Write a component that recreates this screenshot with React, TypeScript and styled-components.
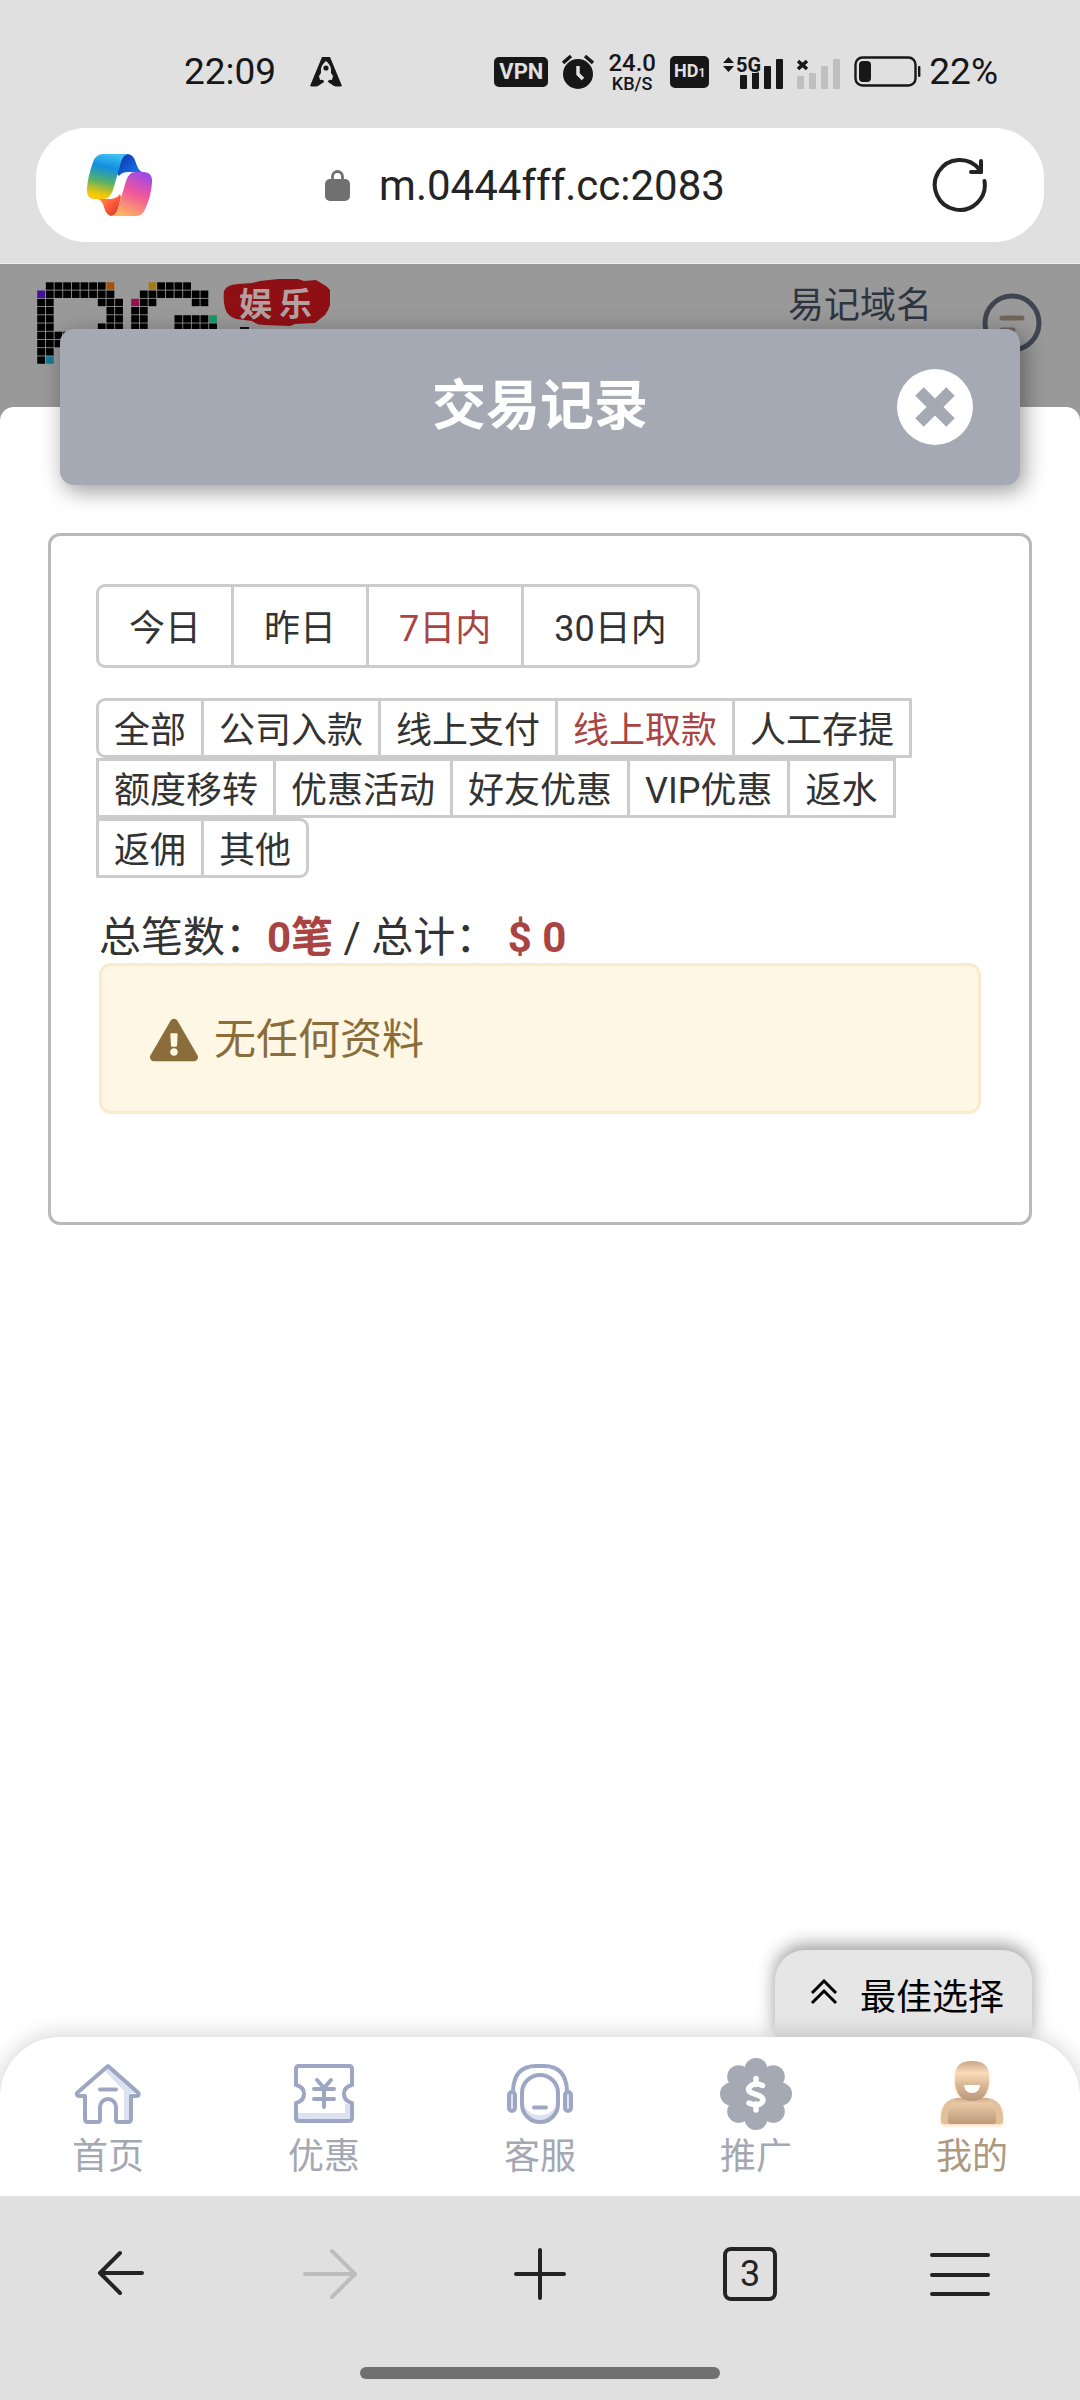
import React, { useState } from "react";
import styled, { createGlobalStyle } from "styled-components";

const GlobalStyle = createGlobalStyle`
  *, *::before, *::after { box-sizing: border-box; }
  body { margin: 0; background: #e0e0e0; }
  body, button, input {
    font-family: Roboto, "Noto Sans CJK SC", sans-serif;
    font-weight: 400;
  }
  button { margin: 0; padding: 0; border: 0; background: none; color: inherit; cursor: pointer; }
  svg { display: block; flex: none; }
`;

const Screen = styled.div`
  display: flex;
  flex-direction: column;
  min-height: 100vh;
  color: #333;
`;

/* ---------- status bar ---------- */

const StatusBar = styled.header`
  display: flex;
  align-items: center;
  justify-content: space-between;
  height: 128px;
  padding: 16px 82px 0 184px;
  color: #171717;
  font-size: 37px;
  line-height: 40px;
`;

const StatusGroup = styled.div<{ $gap: number }>`
  display: flex;
  align-items: center;
  gap: ${(p) => p.$gap}px;
`;

const Badge = styled.span<{ $size: number }>`
  padding: 0 ${(p) => (p.$size > 20 ? 5 : 4)}px;
  border-radius: 5px;
  background: #171717;
  color: #e0e0e0;
  font-size: ${(p) => p.$size}px;
  font-weight: 700;
  line-height: 30px;
`;

const Small = styled.small`
  font-size: 12px;
`;

const Speed = styled.span`
  display: flex;
  flex-direction: column;
  align-items: center;
  font-size: 24px;
  font-weight: 500;
  line-height: 24px;
`;

const SpeedUnit = styled.span`
  font-size: 18px;
  line-height: 18px;
`;

/* ---------- address bar ---------- */

const AddressWrap = styled.div`
  padding: 0 36px 21px;
  border-bottom: 1px solid #eee;
`;

const AddressBar = styled.div`
  display: flex;
  align-items: center;
  justify-content: space-between;
  height: 114px;
  padding: 0 56px 0 50px;
  border-radius: 50px;
  background: #fff;
`;

const Url = styled.button`
  display: flex;
  align-items: center;
  gap: 29px;
  padding: 2px 36px 0 0;
  color: #242424;
  font-size: 42px;
  line-height: 50px;
`;

/* ---------- site ---------- */

const Site = styled.main`
  display: flex;
  flex: 1;
  flex-direction: column;
  background: #999;
`;

const SiteHeader = styled.div`
  display: flex;
  align-items: flex-start;
  height: 143px;
  padding: 15px 38px 0 36px;
`;

const DomainLink = styled.a`
  margin: 0 50px 0 auto;
  padding-top: 3px;
  color: #2f3540;
  font-size: 36px;
  line-height: 48px;
  text-decoration: none;
`;

const MenuButton = styled.button`
  padding-top: 14px;
`;

const Sheet = styled.section`
  display: flex;
  flex: 1;
  flex-direction: column;
  border-radius: 14px 14px 0 0;
  background: #fff;
`;

const TitleBar = styled.div`
  display: grid;
  grid-template-columns: 1fr auto 1fr;
  align-items: center;
  height: 156px;
  margin: -78px 60px 48px;
  padding: 0 47px;
  border-radius: 14px;
  background: #a4a9b4;
  color: #fff;
  box-shadow: 4px 6px 22px rgba(0, 0, 0, 0.4);
`;

const Title = styled.h1`
  grid-column: 2;
  margin: 0;
  font-size: 54px;
  font-weight: 700;
  line-height: 80px;
`;

const CloseButton = styled.button`
  justify-self: end;
`;

const Panel = styled.div`
  min-height: 692px;
  margin: 0 48px;
  padding: 48px 45px;
  border: 3px solid #b9b9b9;
  border-radius: 12px;
`;

const ButtonGroup = styled.div`
  display: flex;
  flex-wrap: wrap;
  margin: 0 0 30px 3px;
`;

const Option = styled.button<{ $active: boolean; $large?: boolean }>`
  height: ${(p) => (p.$large ? 84 : 60)}px;
  margin-left: -3px;
  padding: 6px ${(p) => (p.$large ? 30 : 15)}px 0;
  border: 3px solid #ccc;
  background: #fff;
  color: ${(p) => (p.$active ? "#a94442" : "#333")};
  font-size: 36px;
  line-height: 48px;
  &:first-child { border-radius: 9px 0 0 9px; }
  &:last-child { border-radius: 0 9px 9px 0; }
`;

const Totals = styled.p`
  margin: 0 3px;
  padding-top: 4px;
  font-size: 42px;
  line-height: 51px;
`;

const Amount = styled.strong`
  color: #a94442;
  font-weight: 700;
`;

const Alert = styled.div`
  display: flex;
  align-items: center;
  gap: 16px;
  margin: 0 3px;
  padding: 44px 48px 41px;
  border: 3px solid #faebcc;
  border-radius: 12px;
  background: #fdf7e3;
  color: #8a6d3b;
  font-size: 42px;
  line-height: 60px;
`;

const BestPick = styled.button`
  display: flex;
  align-items: center;
  gap: 22px;
  align-self: flex-end;
  height: 87px;
  margin: auto 48px 0 0;
  padding: 8px 28px 0 35px;
  border-radius: 30px 30px 0 0;
  background: #e6e6e6;
  color: #000;
  font-size: 36px;
  line-height: 48px;
  box-shadow: 0 -5px 18px rgba(0, 0, 0, 0.4);
  svg { margin-bottom: 12px; }
`;

const TabBar = styled.nav`
  position: relative;
  display: flex;
  height: 159px;
  padding-top: 20px;
  border-radius: 60px 60px 0 0;
  background: #fff;
  box-shadow: 0 0 24px rgba(0, 0, 0, 0.2);
`;

const Tab = styled.a<{ $active?: boolean }>`
  display: flex;
  flex: 1;
  flex-direction: column;
  align-items: center;
  gap: 2px;
  color: ${(p) => (p.$active ? "#af9880" : "#a4a8b2")};
  font-size: 36px;
  line-height: 48px;
  text-decoration: none;
`;

/* ---------- browser toolbar ---------- */

const Toolbar = styled.footer`
  position: relative;
  display: flex;
  flex-direction: column;
  align-items: center;
  justify-content: space-between;
  height: 204px;
  padding: 50px 15px 21px;
  background: #e0e0e0;
`;

const ToolRow = styled.div`
  display: flex;
  width: 100%;
`;

const Tool = styled.button`
  display: flex;
  flex: 1;
  align-items: center;
  justify-content: center;
  height: 56px;
  color: #242424;
  &:disabled { color: #bdbdbd; cursor: default; }
`;

const TabCount = styled.span`
  width: 54px;
  height: 54px;
  border: 4px solid #242424;
  border-radius: 8px;
  font-size: 36px;
  line-height: 46px;
`;

const HomeIndicator = styled.div`
  width: 360px;
  height: 12px;
  border-radius: 6px;
  background: #707070;
`;

/* ---------- drawings ---------- */

const RocketIcon = () => (
  <svg width="32" height="30" viewBox="0 0 32 30" aria-hidden="true">
    <path d="M12 0h8l12 29q-4 1-8 0l-6-4q0-3 4-2l1-4-2-3V12q-1-5-5-8-4 3-5 8v4l-2 3 1 4q4-1 4 2l-6 4q-4 1-8 0z" fill="#171717" />
    <circle cx="16" cy="11" r="2.6" fill="#171717" />
  </svg>
);

const AlarmIcon = () => (
  <svg width="32" height="36" viewBox="0 0 32 36" aria-hidden="true">
    <circle cx="16" cy="20" r="15" fill="#171717" />
    <path d="M1 9 9 2M31 9 23 2" stroke="#171717" strokeWidth="3.5" />
    <path d="M16 12v8l5 5" stroke="#e0e0e0" strokeWidth="3.5" fill="none" />
  </svg>
);

const MobileSignal = () => (
  <svg width="60" height="46" viewBox="0 -6 60 46" aria-hidden="true">
    <path d="M0 8 5.500 2 11 8zM0 11h11l-5.500 6z" fill="#171717" />
    <rect x="17" y="20" width="7" height="14" rx="1" fill="#171717" />
    <rect x="29" y="17" width="7" height="17" rx="1" fill="#171717" />
    <rect x="41" y="11" width="7" height="23" rx="1" fill="#171717" />
    <rect x="53" y="4" width="7" height="30" rx="1" fill="#171717" />
    <text x="13" y="17" fontSize="20" fontWeight="700" fill="#171717" stroke="#e0e0e0" strokeWidth="2" paintOrder="stroke">5G</text>
  </svg>
);

const EmptySignal = () => (
  <svg width="43" height="46" viewBox="0 -6 43 46" aria-hidden="true">
    <path d="M1 6 10 14M10 6 1 14" stroke="#171717" strokeWidth="3.5" />
    <rect x="0" y="21" width="7" height="13" rx="1" fill="#bfbfbf" />
    <rect x="12" y="18" width="7" height="16" rx="1" fill="#bfbfbf" />
    <rect x="24" y="11" width="7" height="23" rx="1" fill="#bfbfbf" />
    <rect x="36" y="4" width="7" height="30" rx="1" fill="#bfbfbf" />
  </svg>
);

const BatteryIcon = () => (
  <svg width="67" height="32" viewBox="0 0 67 32" aria-hidden="true">
    <rect x="1.500" y="1.500" width="60" height="28" rx="7" fill="none" stroke="#171717" strokeWidth="2.400" />
    <rect x="5" y="5" width="12" height="21" rx="4" fill="#171717" />
    <rect x="64" y="10" width="2.400" height="11" rx="1" fill="#171717" />
  </svg>
);

const CopilotLogo = () => (
  <svg width="68" height="62" viewBox="0 0 68 62" aria-hidden="true">
    <defs>
      <linearGradient id="cpA" x1="0.600" y1="0" x2="0.400" y2="1">
        <stop offset="0" stopColor="#3fc0f5" /><stop offset="0.300" stopColor="#118fe0" />
        <stop offset="0.620" stopColor="#53b06b" /><stop offset="0.900" stopColor="#e8c60c" /><stop offset="1" stopColor="#ffc800" />
      </linearGradient>
      <linearGradient id="cpB" x1="0.700" y1="0" x2="0.300" y2="1">
        <stop offset="0" stopColor="#a04be8" /><stop offset="0.450" stopColor="#f0569a" /><stop offset="1" stopColor="#ffb45c" />
      </linearGradient>
      <linearGradient id="cpC" x1="0" y1="0" x2="1" y2="1">
        <stop offset="0" stopColor="#0b2fae" /><stop offset="1" stopColor="#1b80ea" />
      </linearGradient>
      <linearGradient id="cpD" x1="0" y1="0" x2="1" y2="1">
        <stop offset="0" stopColor="#ff9a4a" /><stop offset="0.500" stopColor="#ff5f3c" /><stop offset="1" stopColor="#c8322c" />
      </linearGradient>
    </defs>
    <path d="M31 20 36 3Q38 0 42 0 48 1 50 9 52 16 56 18H42Q36 18 33 22z" fill="url(#cpC)" />
    <path d="M35 43 31 59Q29 62 25 62 20 61 18 53 16 46 12 45h13q7-1 9-5z" fill="url(#cpD)" />
    <path d="M17 0h25q-5 1-7 8l-8 28q-3 9-10 9H8Q0 45 1 34 2 22 7 8 10 0 17 0z" fill="url(#cpA)" />
    <path d="M50 62H25q5-1 7-8l8-27q3-9 9-9h8q10 0 9 11-1 13-6 24-3 9-10 9z" fill="url(#cpB)" />
  </svg>
);

const LockIcon = () => (
  <svg width="25" height="32" viewBox="0 0 25 32" aria-hidden="true">
    <rect x="0" y="9" width="25" height="22" rx="5" fill="#707070" />
    <path d="M7.500 11V6.500a5 5 0 0 1 10 0V11" fill="none" stroke="#707070" strokeWidth="2.800" />
  </svg>
);

const RefreshIcon = () => (
  <svg width="56" height="56" viewBox="0 0 56 56" fill="none" stroke="#242424" strokeWidth="4" strokeLinecap="round" strokeLinejoin="round" aria-hidden="true">
    <path d="M52.500 24a25 25 0 1 1-5-11.500l1.500 2.500" />
    <path d="M49 4v11H39" />
  </svg>
);

const P_ROWS = [".#######o.", "p########.", "##.....###", "##......##", "##......##", "##.....###", "########..", "#######...", "##........", "#b........"];
const G_ROWS = ["..y####...", ".########.", "m##....##.", "##........", "##...####g", "##...#####", "##......##"];
const PIXEL_COLORS: Record<string, string> = {
  "#": "#000", o: "#a8500a", p: "#42129b", b: "#157a97", y: "#a67c12", m: "#96124f", g: "#159a63",
};

const Pixels = ({ rows, x0 }: { rows: string[]; x0: number }) => (
  <>
    {rows.flatMap((row, y) =>
      row.split("").map((c, x) =>
        c === "." ? null : <rect key={`${x}-${y}`} x={x0 + x * 8.66} y={3.300 + y * 8.230} width="7.800" height="7.400" fill={PIXEL_COLORS[c]} />
      )
    )}
  </>
);

const SiteLogo = () => (
  <svg width="294" height="90" viewBox="0 0 294 90" role="img" aria-label="PG 娱乐">
    <Pixels rows={P_ROWS} x0={1.200} />
    <Pixels rows={G_ROWS} x0={95.200} />
    <path d="M188 12q2-6 14-7l14-1 8-2 18-2 8-1 12 1 6 2 12-1 10 6q5 4 6 9-1 12-7 20l-10 8-20 1-5 2-26-1q-7 0-12-4l-16-2q-9-3-11-11-2-8-1-17z" fill="#8e1014" />
    <text x="203" y="37" fontSize="33" fontWeight="700" fill="#b3a0a1">娱</text>
    <text x="243" y="37" fontSize="33" fontWeight="700" fill="#b3a0a1">乐</text>
    <rect x="204" y="48" width="9" height="8" fill="#111" />
  </svg>
);

const MenuCircle = () => (
  <svg width="60" height="60" viewBox="0 0 60 60" fill="none" aria-hidden="true">
    <circle cx="30" cy="30" r="27" stroke="#404551" strokeWidth="5" />
    <path d="M20 25h20M20 37h11" stroke="#73655a" strokeWidth="5" strokeLinecap="round" />
  </svg>
);

const CloseIcon = () => (
  <svg width="76" height="76" viewBox="0 0 76 76" aria-hidden="true">
    <circle cx="38" cy="38" r="38" fill="#fff" />
    <path d="M22.500 22.500 53.500 53.500M53.500 22.500 22.500 53.500" stroke="#a4a9b4" strokeWidth="12" />
  </svg>
);

const WarningIcon = () => (
  <svg width="48" height="44" viewBox="0 0 576 512" aria-hidden="true">
    <path fill="#8a6d3b" d="M569.517 440.013C587.975 472.007 564.806 512 527.940 512H48.054c-36.937 0-59.999-40.055-41.577-71.987L246.423 23.985c18.467-32.009 64.720-31.951 83.154 0l239.940 416.028zM288 354c-25.405 0-46 20.595-46 46s20.595 46 46 46 46-20.595 46-46-20.595-46-46-46zm-43.673-165.346l7.418 136c.347 6.364 5.609 11.346 11.982 11.346h48.546c6.373 0 11.635-4.982 11.982-11.346l7.418-136c.375-6.874-5.098-12.654-11.982-12.654h-63.383c-6.884 0-12.356 5.780-11.981 12.654z" />
  </svg>
);

const ChevronsIcon = () => (
  <svg width="28" height="26" viewBox="0 0 28 26" fill="none" stroke="#000" strokeWidth="3" aria-hidden="true">
    <path d="M2 14 14 2l12 12M2 24l12-12 12 12" />
  </svg>
);

const LINE = "#9da7c4";
const TINT = "#dce2f2";

const HomeIcon = () => (
  <svg width="74" height="74" viewBox="0 0 74 74" fill="none" stroke={LINE} strokeWidth="4" strokeLinecap="round" strokeLinejoin="round" aria-hidden="true">
    <path d="M37 9 68 36H60V64H53V34L35 15z" fill={TINT} stroke="none" />
    <path d="M37 9 67.500 36q1 3-2 3H60v23q0 3-3 3H47q-2 0-2-2V50a8 8 0 0 0-16 0v13q0 2-2 2H17q-3 0-3-3V39H8q-3 0-2-3z" />
    <path d="M29 32.500H45" />
  </svg>
);

const CouponIcon = () => (
  <svg width="74" height="74" viewBox="0 0 74 74" fill="none" stroke={LINE} strokeWidth="4" strokeLinecap="round" strokeLinejoin="round" aria-hidden="true">
    <path d="M10 56H58V47H65V63H10z" fill={TINT} stroke="none" />
    <path d="M12 9H62q3 0 3 3V28q-8 2-8 9t8 9V61q0 3-3 3H12q-3 0-3-3V46q8-2 8-9t-8-9V12q0-3 3-3z" />
    <path d="M30 23l7 8 7-8M27 32H47M27 42H47M37 32V50" />
  </svg>
);

const ServiceIcon = () => (
  <svg width="74" height="74" viewBox="0 0 74 74" fill="none" stroke={LINE} strokeWidth="4" strokeLinecap="round" strokeLinejoin="round" aria-hidden="true">
    <path d="M20 48Q26 58 37 58T54 48Q52 65 37 65T20 48z" fill={TINT} stroke="none" />
    <rect x="19" y="18" width="36" height="47" rx="18" />
    <path d="M10 34Q11 9 33 9h8Q63 9 64 34" />
    <rect x="6" y="35" width="6" height="19" rx="3" fill={TINT} />
    <rect x="62" y="35" width="6" height="19" rx="3" fill={TINT} />
    <path d="M31 50.500H43" />
  </svg>
);

const PromoteIcon = () => (
  <svg width="74" height="74" viewBox="0 0 74 74" aria-hidden="true">
    <g fill="#a4a9b4">
      <circle cx="37" cy="37" r="27" />
      {Array.from({ length: 8 }, (_, i) => (
        <circle
          key={i}
          cx={37 + 24.500 * Math.cos((i * Math.PI) / 4)}
          cy={37 + 24.500 * Math.sin((i * Math.PI) / 4)}
          r="11.500"
        />
      ))}
    </g>
    <path d="M43.500 28.500Q38 26 33 28 26 33 33 36L41 39Q47 43 41 47 36 49 30 46M37 21.500v6M37 47v6" fill="none" stroke="#fff" strokeWidth="5.500" strokeLinecap="round" />
  </svg>
);

const MineIcon = () => (
  <svg width="74" height="74" viewBox="0 0 74 74" aria-hidden="true">
    <defs>
      <linearGradient id="head" x1="0" y1="0" x2="0" y2="1">
        <stop offset="0" stopColor="#c5a586" /><stop offset="0.300" stopColor="#fbdcba" />
        <stop offset="0.600" stopColor="#d9b795" /><stop offset="1" stopColor="#b8987a" />
      </linearGradient>
      <linearGradient id="body" x1="0" y1="0" x2="0" y2="1">
        <stop offset="0" stopColor="#c9a98a" /><stop offset="0.200" stopColor="#e9c9a6" /><stop offset="1" stopColor="#bb9a7a" />
      </linearGradient>
      <filter id="glow" x="-20%" y="-20%" width="140%" height="150%">
        <feDropShadow dx="0" dy="2" stdDeviation="1.500" floodColor="#fbdcba" />
      </filter>
    </defs>
    <g filter="url(#glow)">
      <path d="M21 41Q7 43 6 59v5q0 3 3 3h56q3 0 3-3v-5q-1-16-15-18z" fill="#e3c09c" />
      <path d="M22 41Q13 48 13 56v8q0 3 3 3h42q3 0 3-3v-8q0-8-9-15z" fill="url(#body)" />
      <path d="M20 19Q20 4 37 4t17 15v7Q52 44 37 44T20 26z" fill="url(#head)" />
    </g>
    <path d="M29 28H45Q44 36 37 36T29 28z" fill="#fff" />
  </svg>
);

const BackIcon = () => (
  <svg width="56" height="56" viewBox="0 0 56 56" fill="none" stroke="currentColor" strokeWidth="4" strokeLinecap="round" strokeLinejoin="round" aria-hidden="true">
    <path d="M50 27H8M28 7 8 27l20 20" />
  </svg>
);

const ForwardIcon = () => (
  <svg width="56" height="56" viewBox="0 0 56 56" fill="none" stroke="currentColor" strokeWidth="4" strokeLinecap="round" strokeLinejoin="round" aria-hidden="true">
    <path d="M3 28H53M30 5 53 28 30 51" />
  </svg>
);

const PlusIcon = () => (
  <svg width="56" height="56" viewBox="0 0 56 56" stroke="currentColor" strokeWidth="4" strokeLinecap="round" aria-hidden="true">
    <path d="M28 4V52M4 28H52" />
  </svg>
);

const MenuIcon = () => (
  <svg width="60" height="56" viewBox="0 0 60 56" stroke="currentColor" strokeWidth="4" strokeLinecap="round" aria-hidden="true">
    <path d="M2 9H58M2 29H58M2 48H58" />
  </svg>
);

/* ---------- data ---------- */

const RANGES = ["今日", "昨日", "7日内", "30日内"];
const TYPES = ["全部", "公司入款", "线上支付", "线上取款", "人工存提", "额度移转", "优惠活动", "好友优惠", "VIP优惠", "返水", "返佣", "其他"];
const TABS = [
  { label: "首页", Icon: HomeIcon },
  { label: "优惠", Icon: CouponIcon },
  { label: "客服", Icon: ServiceIcon },
  { label: "推广", Icon: PromoteIcon },
  { label: "我的", Icon: MineIcon },
];

export default function App() {
  const [range, setRange] = useState("7日内");
  const [type, setType] = useState("线上取款");

  return (
    <Screen>
      <GlobalStyle />
      <StatusBar>
        <StatusGroup $gap={34}>
          <span>22:09</span>
          <RocketIcon />
        </StatusGroup>
        <StatusGroup $gap={14}>
          <Badge $size={22}>VPN</Badge>
          <AlarmIcon />
          <Speed>
            24.0
            <SpeedUnit>KB/S</SpeedUnit>
          </Speed>
          <Badge $size={18}>HD<Small>1</Small></Badge>
          <MobileSignal />
          <EmptySignal />
          <StatusGroup $gap={8}>
            <BatteryIcon />
            <span>22%</span>
          </StatusGroup>
        </StatusGroup>
      </StatusBar>

      <AddressWrap>
        <AddressBar>
          <button aria-label="Copilot"><CopilotLogo /></button>
          <Url>
            <LockIcon />
            m.0444fff.cc:2083
          </Url>
          <button aria-label="刷新"><RefreshIcon /></button>
        </AddressBar>
      </AddressWrap>

      <Site>
        <SiteHeader>
          <SiteLogo />
          <DomainLink href="#domain">易记域名</DomainLink>
          <MenuButton aria-label="菜单"><MenuCircle /></MenuButton>
        </SiteHeader>

        <Sheet>
          <TitleBar>
            <Title>交易记录</Title>
            <CloseButton aria-label="关闭"><CloseIcon /></CloseButton>
          </TitleBar>

          <Panel>
            <ButtonGroup>
              {RANGES.map((r) => (
                <Option key={r} $large $active={r === range} onClick={() => setRange(r)}>{r}</Option>
              ))}
            </ButtonGroup>
            <ButtonGroup>
              {TYPES.map((t) => (
                <Option key={t} $active={t === type} onClick={() => setType(t)}>{t}</Option>
              ))}
            </ButtonGroup>
            <Totals>
              总笔数：<Amount>0笔</Amount> / 总计： <Amount>$ 0</Amount>
            </Totals>
            <Alert>
              <WarningIcon />
              无任何资料
            </Alert>
          </Panel>

          <BestPick>
            <ChevronsIcon />
            最佳选择
          </BestPick>
          <TabBar>
            {TABS.map(({ label, Icon }) => (
              <Tab key={label} href="#tab" $active={label === "我的"}>
                <Icon />
                {label}
              </Tab>
            ))}
          </TabBar>
        </Sheet>
      </Site>

      <Toolbar>
        <ToolRow>
          <Tool aria-label="后退"><BackIcon /></Tool>
          <Tool aria-label="前进" disabled><ForwardIcon /></Tool>
          <Tool aria-label="新标签页"><PlusIcon /></Tool>
          <Tool><TabCount>3</TabCount></Tool>
          <Tool aria-label="更多"><MenuIcon /></Tool>
        </ToolRow>
        <HomeIndicator />
      </Toolbar>
    </Screen>
  );
}
